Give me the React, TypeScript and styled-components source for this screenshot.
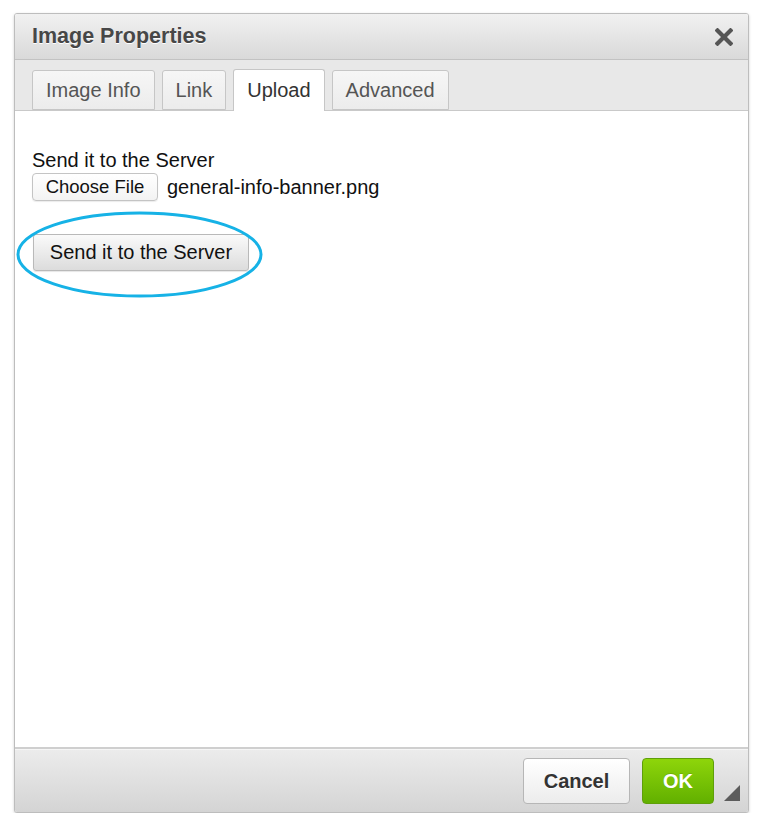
import React from "react";
import styled, { createGlobalStyle } from "styled-components";

const Global = createGlobalStyle`
  html, body { margin: 0; padding: 0; background: #ffffff; }
  body { font-family: "Liberation Sans", Arial, Helvetica, sans-serif; }
`;

const Page = styled.div`
  padding: 13px 0 0 14px;
`;

const Dialog = styled.div`
  width: 735px;
  height: 800px;
  box-sizing: border-box;
  border: 1px solid #bdbdbd;
  border-radius: 3px;
  box-shadow: 0 1px 3px rgba(0, 0, 0, 0.18);
  display: flex;
  flex-direction: column;
  background: #fff;
  overflow: hidden;
`;

const TitleBar = styled.div`
  height: 45px;
  flex: none;
  display: flex;
  align-items: center;
  justify-content: space-between;
  padding: 0 14px 0 17px;
  background: linear-gradient(#f1f1f1, #d9d9d9);
  border-bottom: 1px solid #c2c2c2;
`;

const Title = styled.div`
  font-size: 21.5px;
  font-weight: bold;
  color: #474747;
  text-shadow: 0 1px 0 #fff;
`;

const CloseBtn = styled.button`
  border: 0;
  background: none;
  padding: 0;
  width: 20px;
  height: 20px;
  display: flex;
  align-items: center;
  justify-content: center;
  cursor: pointer;
`;

const TabBar = styled.div`
  flex: none;
  height: 51px;
  box-sizing: border-box;
  display: flex;
  align-items: flex-end;
  gap: 7px;
  padding: 0 0 0 17px;
  background: #e8e8e8;
  border-bottom: 1px solid #c9c9c9;
`;

const Tab = styled.div<{ $active?: boolean }>`
  box-sizing: border-box;
  height: ${(p) => (p.$active ? "42px" : "40px")};
  margin-bottom: ${(p) => (p.$active ? "-1px" : "0")};
  padding: 0 13px;
  display: flex;
  align-items: center;
  font-size: 20px;
  color: ${(p) => (p.$active ? "#333" : "#555")};
  background: ${(p) => (p.$active ? "#fff" : "linear-gradient(#f6f6f6, #ececec)")};
  border: 1px solid #c6c6c6;
  border-bottom: ${(p) => (p.$active ? "0" : "1px solid #c6c6c6")};
  border-radius: 3px 3px 0 0;
`;

const Content = styled.div`
  flex: 1;
  padding: 37px 17px 0 17px;
  color: #111;
`;

const Label = styled.div`
  font-size: 20px;
  line-height: 24px;
`;

const FileRow = styled.div`
  display: flex;
  align-items: center;
  gap: 9px;
  margin-top: 1px;
`;

const FileButton = styled.button`
  box-sizing: border-box;
  height: 28px;
  width: 126px;
  padding: 0;
  font-family: inherit;
  font-size: 18.5px;
  color: #111;
  background: linear-gradient(#ffffff, #f3f3f3);
  border: 1px solid #c4c4c4;
  border-radius: 4px;
  box-shadow: 0 1px 1px rgba(0, 0, 0, 0.08);
`;

const FileName = styled.span`
  font-size: 20px;
`;

const SendWrap = styled.div`
  position: relative;
  display: inline-block;
  margin-top: 33px;
  margin-left: 1px;
`;

const SendButton = styled.button`
  box-sizing: border-box;
  height: 37px;
  width: 216px;
  padding: 0;
  font-family: inherit;
  font-size: 20px;
  color: #111;
  background: linear-gradient(#fafafa, #dcdcdc);
  border: 1px solid #b9b9b9;
  border-radius: 3px;
  box-shadow: 0 1px 1px rgba(0, 0, 0, 0.1);
`;

const Highlight = styled.svg`
  position: absolute;
  left: -17px;
  top: -23px;
  pointer-events: none;
  overflow: visible;
`;

const Footer = styled.div`
  position: relative;
  flex: none;
  height: 65px;
  box-sizing: border-box;
  display: flex;
  justify-content: flex-end;
  align-items: flex-start;
  gap: 12px;
  padding: 9px 34px 0 0;
  background: linear-gradient(#ececec, #d4d4d4);
  border-top: 2px solid #cfcfcf;
  box-shadow: inset 0 1px 0 #f6f6f6;
`;

const FooterButton = styled.button<{ $primary?: boolean }>`
  box-sizing: border-box;
  height: 46px;
  width: ${(p) => (p.$primary ? "72px" : "107px")};
  padding: 0;
  font-family: inherit;
  font-size: 20px;
  font-weight: bold;
  color: ${(p) => (p.$primary ? "#fff" : "#333")};
  background: ${(p) =>
    p.$primary ? "linear-gradient(#8ed50a, #62b000)" : "linear-gradient(#ffffff, #ececec)"};
  border: 1px solid ${(p) => (p.$primary ? "#5f9f0a" : "#b6b6b6")};
  border-radius: 4px;
  text-shadow: ${(p) => (p.$primary ? "0 -1px 0 rgba(0,0,0,0.15)" : "0 1px 0 #fff")};
`;

const Grip = styled.svg`
  position: absolute;
  right: 8px;
  bottom: 11px;
`;

export default function App() {
  return (
    <>
      <Global />
      <Page>
        <Dialog>
          <TitleBar>
            <Title>Image Properties</Title>
            <CloseBtn aria-label="Close">
              <svg width="18" height="18" viewBox="0 0 18 18">
                <path d="M2.5 2.5 L15.5 15.5 M15.5 2.5 L2.5 15.5" stroke="#555" strokeWidth="4.2" strokeLinecap="square" />
              </svg>
            </CloseBtn>
          </TitleBar>
          <TabBar>
            <Tab>Image Info</Tab>
            <Tab>Link</Tab>
            <Tab $active>Upload</Tab>
            <Tab>Advanced</Tab>
          </TabBar>
          <Content>
            <Label>Send it to the Server</Label>
            <FileRow>
              <FileButton>Choose File</FileButton>
              <FileName>general-info-banner.png</FileName>
            </FileRow>
            <SendWrap>
              <SendButton>Send it to the Server</SendButton>
              <Highlight width="247" height="87" viewBox="0 0 247 87">
                <ellipse cx="123.5" cy="43.5" rx="121.5" ry="41.5" fill="none" stroke="#16b2e6" strokeWidth="3" />
              </Highlight>
            </SendWrap>
          </Content>
          <Footer>
            <FooterButton>Cancel</FooterButton>
            <FooterButton $primary>OK</FooterButton>
            <Grip width="16" height="16" viewBox="0 0 16 16">
              <path d="M16 0 L16 16 L0 16 Z" fill="#5c5c5c" />
            </Grip>
          </Footer>
        </Dialog>
      </Page>
    </>
  );
}
